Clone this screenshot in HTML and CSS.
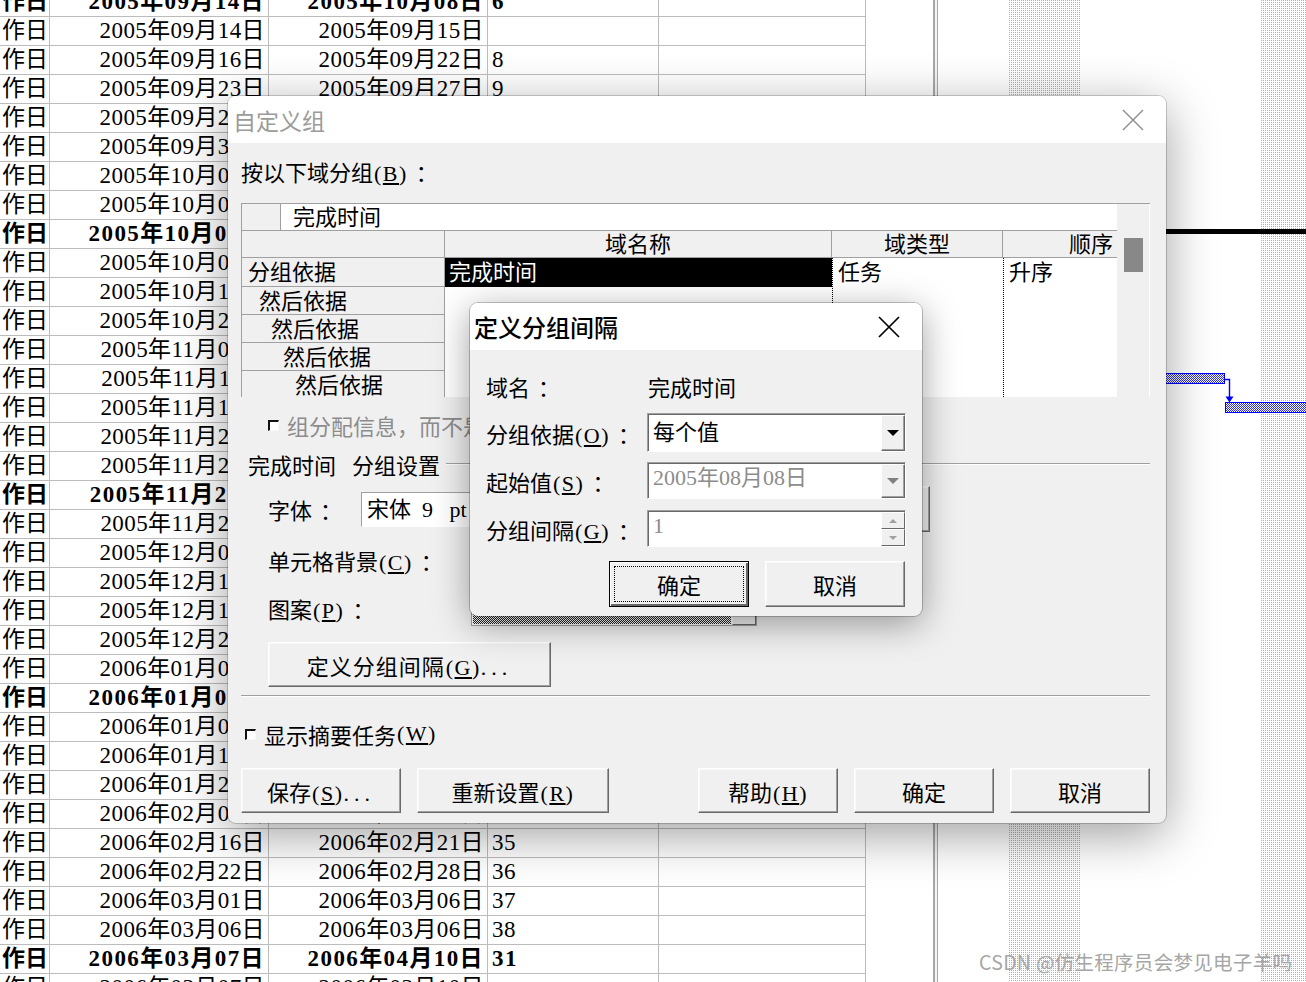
FILE: index.html
```html
<!DOCTYPE html>
<html lang="zh-CN">
<head>
  <meta charset="UTF-8">
  <title>自定义组</title>
  <link rel="stylesheet" href="styles.css">
</head>
<body>

<div class="project">
  <!-- tabla de tareas -->
  <div class="sheet">
    <div class="row summary"><span class="c1">作日</span><span class="c2">2005年09月14日</span><span class="c3">2005年10月08日</span><span class="c4">6</span><span class="c5"></span></div>
    <div class="row"><span class="c1">作日</span><span class="c2">2005年09月14日</span><span class="c3">2005年09月15日</span><span class="c4"></span><span class="c5"></span></div>
    <div class="row"><span class="c1">作日</span><span class="c2">2005年09月16日</span><span class="c3">2005年09月22日</span><span class="c4">8</span><span class="c5"></span></div>
    <div class="row"><span class="c1">作日</span><span class="c2">2005年09月23日</span><span class="c3">2005年09月27日</span><span class="c4">9</span><span class="c5"></span></div>
    <div class="row"><span class="c1">作日</span><span class="c2">2005年09月28日</span><span class="c3">2005年09月29日</span><span class="c4">10</span><span class="c5"></span></div>
    <div class="row"><span class="c1">作日</span><span class="c2">2005年09月30日</span><span class="c3">2005年10月04日</span><span class="c4">11</span><span class="c5"></span></div>
    <div class="row"><span class="c1">作日</span><span class="c2">2005年10月05日</span><span class="c3">2005年10月06日</span><span class="c4">12</span><span class="c5"></span></div>
    <div class="row"><span class="c1">作日</span><span class="c2">2005年10月07日</span><span class="c3">2005年10月08日</span><span class="c4">13</span><span class="c5"></span></div>
    <div class="row summary"><span class="c1">作日</span><span class="c2">2005年10月09日</span><span class="c3">2005年11月25日</span><span class="c4">7</span><span class="c5"></span></div>
    <div class="row"><span class="c1">作日</span><span class="c2">2005年10月09日</span><span class="c3">2005年10月12日</span><span class="c4"></span><span class="c5"></span></div>
    <div class="row"><span class="c1">作日</span><span class="c2">2005年10月13日</span><span class="c3">2005年10月20日</span><span class="c4">16</span><span class="c5"></span></div>
    <div class="row"><span class="c1">作日</span><span class="c2">2005年10月21日</span><span class="c3">2005年11月03日</span><span class="c4">17</span><span class="c5"></span></div>
    <div class="row"><span class="c1">作日</span><span class="c2">2005年11月04日</span><span class="c3">2005年11月10日</span><span class="c4">18</span><span class="c5"></span></div>
    <div class="row"><span class="c1">作日</span><span class="c2">2005年11月11日</span><span class="c3">2005年11月14日</span><span class="c4">19</span><span class="c5"></span></div>
    <div class="row"><span class="c1">作日</span><span class="c2">2005年11月15日</span><span class="c3">2005年11月21日</span><span class="c4">20</span><span class="c5"></span></div>
    <div class="row"><span class="c1">作日</span><span class="c2">2005年11月22日</span><span class="c3">2005年11月23日</span><span class="c4">21</span><span class="c5"></span></div>
    <div class="row"><span class="c1">作日</span><span class="c2">2005年11月24日</span><span class="c3">2005年11月25日</span><span class="c4">22</span><span class="c5"></span></div>
    <div class="row summary"><span class="c1">作日</span><span class="c2">2005年11月26日</span><span class="c3">2006年01月06日</span><span class="c4">15</span><span class="c5"></span></div>
    <div class="row"><span class="c1">作日</span><span class="c2">2005年11月26日</span><span class="c3">2005年12月02日</span><span class="c4"></span><span class="c5"></span></div>
    <div class="row"><span class="c1">作日</span><span class="c2">2005年12月03日</span><span class="c3">2005年12月12日</span><span class="c4">25</span><span class="c5"></span></div>
    <div class="row"><span class="c1">作日</span><span class="c2">2005年12月13日</span><span class="c3">2005年12月16日</span><span class="c4">26</span><span class="c5"></span></div>
    <div class="row"><span class="c1">作日</span><span class="c2">2005年12月17日</span><span class="c3">2005年12月23日</span><span class="c4">27</span><span class="c5"></span></div>
    <div class="row"><span class="c1">作日</span><span class="c2">2005年12月24日</span><span class="c3">2006年01月02日</span><span class="c4">28</span><span class="c5"></span></div>
    <div class="row"><span class="c1">作日</span><span class="c2">2006年01月03日</span><span class="c3">2006年01月06日</span><span class="c4">29</span><span class="c5"></span></div>
    <div class="row summary"><span class="c1">作日</span><span class="c2">2006年01月07日</span><span class="c3">2006年03月06日</span><span class="c4">24</span><span class="c5"></span></div>
    <div class="row"><span class="c1">作日</span><span class="c2">2006年01月07日</span><span class="c3">2006年01月12日</span><span class="c4"></span><span class="c5"></span></div>
    <div class="row"><span class="c1">作日</span><span class="c2">2006年01月13日</span><span class="c3">2006年01月20日</span><span class="c4">32</span><span class="c5"></span></div>
    <div class="row"><span class="c1">作日</span><span class="c2">2006年01月21日</span><span class="c3">2006年02月06日</span><span class="c4">33</span><span class="c5"></span></div>
    <div class="row"><span class="c1">作日</span><span class="c2">2006年02月07日</span><span class="c3">2006年02月15日</span><span class="c4">34</span><span class="c5"></span></div>
    <div class="row"><span class="c1">作日</span><span class="c2">2006年02月16日</span><span class="c3">2006年02月21日</span><span class="c4">35</span><span class="c5"></span></div>
    <div class="row"><span class="c1">作日</span><span class="c2">2006年02月22日</span><span class="c3">2006年02月28日</span><span class="c4">36</span><span class="c5"></span></div>
    <div class="row"><span class="c1">作日</span><span class="c2">2006年03月01日</span><span class="c3">2006年03月06日</span><span class="c4">37</span><span class="c5"></span></div>
    <div class="row"><span class="c1">作日</span><span class="c2">2006年03月06日</span><span class="c3">2006年03月06日</span><span class="c4">38</span><span class="c5"></span></div>
    <div class="row summary"><span class="c1">作日</span><span class="c2">2006年03月07日</span><span class="c3">2006年04月10日</span><span class="c4">31</span><span class="c5"></span></div>
    <div class="row"><span class="c1">作日</span><span class="c2">2006年03月07日</span><span class="c3">2006年03月10日</span><span class="c4"></span><span class="c5"></span></div>
  </div>

  <div class="gap"></div>
  <div class="divider"></div>

  <!-- diagrama -->
  <div class="gantt">
    <div class="weekend w1"></div>
    <div class="weekend w2"></div>
    <div class="summary-line"></div>
    <div class="bar bar1"></div>
    <svg class="link" width="14" height="28" viewBox="0 0 14 28">
      <path d="M0 2.5H5.5V20" fill="none" stroke="#0000ff" stroke-width="1.4"/>
      <polygon points="1.5,19.5 9.5,19.5 5.5,25.5" fill="#0000ff"/>
    </svg>
    <div class="bar bar2"></div>
  </div>
</div>

<!-- Dialogo principal -->
<div class="dialog">
  <div class="titlebar">
    <span class="title gray">自定义组</span>
    <svg width="22" height="22" viewBox="0 0 22 22"><path d="M1 1L21 21M21 1L1 21" stroke="#8c8c8c" stroke-width="1.4"/></svg>
  </div>

  <div class="dialog-body">
    <div class="group-label">按以下域分组<span class="key">(<u>B</u>)</span><span class="colon">：</span></div>

    <div class="fields">
      <div class="corner"></div>
      <div class="current">完成时间</div>
      <div class="scroll"><div class="thumb"></div></div>

      <div class="head-blank"></div>
      <div class="head h-name">域名称</div>
      <div class="head h-type">域类型</div>
      <div class="head h-order">顺序</div>

      <div class="lbl l1">分组依据</div>
      <div class="lbl l2">然后依据</div>
      <div class="lbl l3">然后依据</div>
      <div class="lbl l4">然后依据</div>
      <div class="lbl l5">然后依据</div>

      <div class="selected">完成时间</div>
      <div class="blank"></div>
      <div class="col-type">任务</div>
      <div class="col-order">升序</div>
    </div>

    <div class="check-row disabled">
      <span class="box"></span>组分配信息，而不是显示摘要任务
    </div>

    <div class="section">
      <span>完成时间</span><span class="section-name">分组设置</span>
      <div class="section-line"></div>
    </div>

    <div class="font-row">
      <span class="font-label">字体<span class="colon">：</span></span>
      <div class="font-box">宋体&nbsp;&nbsp;9&nbsp;&nbsp;&nbsp;pt</div>
      <button class="btn font-btn">字体...</button>
    </div>

    <div class="plain-row">单元格背景<span class="key">(<u>C</u>)</span><span class="colon">：</span></div>

    <div class="pattern-row">
      <span class="pattern-label">图案<span class="key">(<u>P</u>)</span><span class="colon">：</span></span>
      <div class="pattern">
        <div class="pattern-fill"></div>
        <div class="pattern-btn"></div>
      </div>
    </div>

    <button class="btn interval-btn">定义分组间隔<span class="key">(<u>G</u>)</span><span class="dots">...</span></button>

    <div class="separator"></div>

    <div class="check-row summary-check">
      <span class="box"></span>显示摘要任务<span class="key">(<u>W</u>)</span>
    </div>

    <div class="buttons">
      <button class="btn b-save">保存<span class="key">(<u>S</u>)</span><span class="dots">...</span></button>
      <button class="btn b-reset">重新设置<span class="key">(<u>R</u>)</span></button>
      <button class="btn b-std push">帮助<span class="key">(<u>H</u>)</span></button>
      <button class="btn b-std">确定</button>
      <button class="btn b-std">取消</button>
    </div>
  </div>

  <!-- Dialogo secundario -->
  <div class="subdialog">
    <div class="titlebar sub-titlebar">
      <span class="title">定义分组间隔</span>
      <svg width="22" height="22" viewBox="0 0 22 22"><path d="M1 1L21 21M21 1L1 21" stroke="#000" stroke-width="1.7"/></svg>
    </div>
    <div class="sub-body">
      <div class="sub-row r-name">
        <span class="sub-label">域名<span class="colon">：</span></span><span>完成时间</span>
      </div>
      <div class="sub-row r-by">
        <span class="sub-label">分组依据<span class="key">(<u>O</u>)</span><span class="colon">：</span></span>
        <div class="combo">
          <div class="combo-text">每个值</div>
          <div class="drop"><span class="arrow"></span></div>
        </div>
      </div>
      <div class="sub-row r-start">
        <span class="sub-label">起始值<span class="key">(<u>S</u>)</span><span class="colon">：</span></span>
        <div class="combo off">
          <div class="combo-text">2005年08月08日</div>
          <div class="drop"><span class="arrow"></span></div>
        </div>
      </div>
      <div class="sub-row r-step">
        <span class="sub-label">分组间隔<span class="key">(<u>G</u>)</span><span class="colon">：</span></span>
        <div class="combo off">
          <div class="combo-text">1</div>
          <div class="spin">
            <div class="spin-btn"><span class="arrow-up"></span></div>
            <div class="spin-btn"><span class="arrow-down"></span></div>
          </div>
        </div>
      </div>
      <div class="sub-buttons">
        <button class="btn b-std default">确定</button>
        <button class="btn b-std">取消</button>
      </div>
    </div>
  </div>
</div>

<div class="watermark">CSDN @仿生程序员会梦见电子羊吗</div>

</body>
</html>
```

FILE: styles.css
```css
* {
  box-sizing: border-box;
}

body {
  margin: 0;
  width: 1306px;
  height: 982px;
  overflow: hidden;
  position: relative;
  background: #fff;
  font-family: "Liberation Serif", "Noto Sans CJK SC", serif;
  color: #000;
  text-spacing-trim: space-all;
}

u {
  text-underline-offset: 2px;
}

.key {
  letter-spacing: 1.5px;
  margin-left: 1px;
}

.colon {
  margin-left: 8px;
}

.dots {
  letter-spacing: 5px;
}

/* ---------- fondo: tabla + gantt ---------- */

.project {
  display: flex;
  height: 982px;
}

.sheet {
  width: 866px;
}

.row {
  display: grid;
  grid-template-columns: 50px 219px 219px 171px 207px;
  height: 29px;
  border-bottom: 1px solid #bcbcbc;
  font-size: 23px;
  line-height: 28px;
  letter-spacing: 0.4px;
  white-space: nowrap;
}

.row:first-child {
  margin-top: -12px;
}

.row span {
  border-right: 1px solid #bcbcbc;
  overflow: hidden;
}

.row.summary {
  font-weight: bold;
  letter-spacing: 1.4px;
}

.c1 {
  padding-left: 2px;
  letter-spacing: 0;
}

.c2, .c3 {
  text-align: right;
  padding-right: 3px;
}

.c4 {
  padding-left: 4px;
}

.gap {
  width: 67px;
}

.divider {
  width: 5px;
  border-left: 2px solid #a8a8a8;
  border-right: 1px solid #a8a8a8;
  background: #f4f4f4;
}

.gantt {
  flex: 1;
  position: relative;
  overflow: hidden;
}

.weekend {
  position: absolute;
  top: 0;
  bottom: 0;
  width: 73px;
  background: repeating-conic-gradient(#b0b0b0 0 25%, #fff 0 100%) 0 0 / 2px 2px;
}

.w1 { left: 70px; }
.w2 { left: 322px; }

.summary-line {
  position: absolute;
  left: 0;
  right: 0;
  top: 229px;
  height: 5px;
  background: #000;
}

.bar {
  position: absolute;
  height: 11px;
  border: 1px solid #0000ff;
  background: repeating-conic-gradient(#2a2aff 0 25%, #fff 0 50%) 0 0 / 2px 2px;
}

.bar1 { left: 200px; width: 87px; top: 373px; }
.bar2 { left: 287px; width: 90px; top: 402px; }

.link {
  position: absolute;
  left: 286px;
  top: 377px;
}

/* ---------- dialogos ---------- */

.dialog {
  position: absolute;
  left: 228px;
  top: 96px;
  width: 938px;
  height: 727px;
  background: #f0f0f0;
  border-radius: 8px;
  box-shadow: 0 0 0 1px rgba(0, 0, 0, 0.18), 0 12px 50px rgba(0, 0, 0, 0.38);
  font-size: 22px;
}

.titlebar {
  height: 47px;
  background: #fff;
  border-radius: 8px 8px 0 0;
  display: flex;
  align-items: center;
  justify-content: space-between;
  padding: 0 22px 0 5px;
}

.title {
  font-family: "Noto Sans CJK SC", sans-serif;
  font-size: 23px;
}

.title.gray {
  color: #9b9b9b;
}

.dialog-body {
  padding: 17px 16px 0 13px;
}

.group-label {
  height: 28px;
  line-height: 28px;
}

.fields {
  margin-top: 15px;
  display: grid;
  grid-template-columns: 39px 164px 387px 171px 114px 33px;
  grid-template-rows: 27px 27px 29px 28px 28px 28px 26px;
  border-top: 1px solid #a0a0a0;
  border-left: 1px solid #a0a0a0;
  background: #fff;
  line-height: 27px;
  white-space: nowrap;
}

.corner {
  grid-column: 1;
  grid-row: 1;
  background: #f0f0f0;
  border-right: 1px solid #a0a0a0;
  border-bottom: 1px solid #a0a0a0;
}

.current {
  grid-column: 2 / 6;
  grid-row: 1;
  padding-left: 12px;
  border-bottom: 1px solid #a0a0a0;
}

.scroll {
  grid-column: 6;
  grid-row: 1 / 8;
  background: #f0f0f0;
  border-right: 1px solid #fff;
  position: relative;
}

.thumb {
  position: absolute;
  left: 7px;
  top: 34px;
  width: 19px;
  height: 34px;
  background: #888;
}

.head-blank {
  grid-column: 1 / 3;
  grid-row: 2;
  background: #f0f0f0;
  border-right: 1px solid #a0a0a0;
  border-bottom: 1px solid #a0a0a0;
}

.head {
  grid-row: 2;
  background: #f0f0f0;
  border-right: 1px solid #a0a0a0;
  border-bottom: 1px solid #a0a0a0;
  text-align: center;
}

.h-name { grid-column: 3; }
.h-type { grid-column: 4; }
.h-order {
  grid-column: 5;
  text-align: right;
  padding-right: 4px;
  border-right: none;
}

.lbl {
  grid-column: 1 / 3;
  background: #f0f0f0;
  border-right: 1px solid #a0a0a0;
  border-bottom: 1px solid #a0a0a0;
  line-height: 30px;
}

.l1 { grid-row: 3; padding-left: 6px; }
.l2 { grid-row: 4; padding-left: 17px; }
.l3 { grid-row: 5; padding-left: 29px; }
.l4 { grid-row: 6; padding-left: 41px; }
.l5 { grid-row: 7; padding-left: 53px; border-bottom: none; }

.selected {
  grid-column: 3;
  grid-row: 3;
  background: #000;
  color: #fff;
  padding-left: 4px;
  line-height: 29px;
}

.blank {
  grid-column: 3;
  grid-row: 4 / 8;
}

.col-type, .col-order {
  grid-row: 3 / 8;
  border-left: 1px dotted #000;
  padding-left: 5px;
  line-height: 29px;
}

.col-type { grid-column: 4; }
.col-order { grid-column: 5; }

.check-row {
  margin-top: 15px;
  height: 26px;
  display: flex;
  align-items: center;
  padding-left: 27px;
  white-space: nowrap;
}

.check-row.disabled {
  color: #8c8c8c;
}

.box {
  width: 11px;
  height: 11px;
  background: #fff;
  border-style: solid;
  border-width: 2px 1px 1px 2px;
  border-color: #111 #f8f8f8 #f8f8f8 #111;
  margin-right: 8px;
  flex-shrink: 0;
}

.section {
  margin-top: 13px;
  height: 26px;
  display: flex;
  align-items: center;
  padding-left: 7px;
}

.section-name {
  margin-left: 16px;
}

.section-line {
  flex: 1;
  margin-left: 6px;
  border-top: 1px solid #a0a0a0;
  border-bottom: 1px solid #fff;
}

.font-row {
  margin-top: 9px;
  height: 46px;
  display: flex;
  align-items: center;
  padding-left: 27px;
}

.font-label {
  width: 93px;
}

.font-box {
  width: 399px;
  height: 35px;
  background: #fff;
  border: 1px solid;
  border-color: #a0a0a0 #fff #fff #a0a0a0;
  padding-left: 5px;
  line-height: 33px;
}

.font-btn {
  margin-left: 6px;
  width: 164px;
  height: 46px;
}

.plain-row {
  margin-top: 14px;
  height: 34px;
  line-height: 34px;
  padding-left: 27px;
}

.pattern-row {
  margin-top: 10px;
  height: 36px;
  display: flex;
  align-items: center;
  padding-left: 27px;
}

.pattern-label {
  width: 203px;
}

.pattern {
  display: flex;
  width: 286px;
  height: 35px;
  border: 1px solid #a0a0a0;
  background: #fff;
}

.pattern-fill {
  flex: 1;
  margin: 1px;
  background: repeating-conic-gradient(#222 0 25%, #fff 0 50%) 0 0 / 2px 2px;
}

.pattern-btn {
  width: 24px;
  background: #f0f0f0;
  border: 1px solid;
  border-color: #fff #696969 #696969 #fff;
}

.btn {
  font: inherit;
  font-size: 22px;
  color: #000;
  padding: 0;
  background: #f0f0f0;
  border: 1px solid;
  border-color: #fff #696969 #696969 #fff;
  box-shadow: inset -1px -1px #a0a0a0, inset 1px 1px #f8f8f8;
  white-space: nowrap;
}

.interval-btn {
  display: block;
  margin: 16px 0 0 27px;
  width: 283px;
  height: 45px;
  letter-spacing: 1px;
}

.separator {
  margin-top: 8px;
  border-top: 1px solid #a0a0a0;
  border-bottom: 1px solid #fff;
}

.summary-check {
  margin-top: 24px;
  padding-left: 4px;
}

.buttons {
  margin-top: 21px;
  display: flex;
  gap: 16px;
  height: 45px;
}

.b-save { width: 160px; }
.b-reset { width: 192px; }
.b-std { width: 140px; }

.push {
  margin-left: auto;
}

/* ---------- definir intervalo ---------- */

.subdialog {
  position: absolute;
  left: 242px;
  top: 207px;
  width: 452px;
  height: 313px;
  background: #f0f0f0;
  border-radius: 8px;
  box-shadow: 0 0 0 1px rgba(0, 0, 0, 0.22), 0 8px 36px rgba(0, 0, 0, 0.38);
}

.sub-titlebar {
  padding-left: 4px;
}

.sub-titlebar .title {
  font-size: 24px;
  font-weight: 500;
}

.sub-body {
  padding: 22px 16px 0;
}

.sub-row {
  display: flex;
  align-items: center;
  white-space: nowrap;
}

.sub-label {
  width: 161px;
}

.r-name { height: 28px; }
.r-name .sub-label { width: 162px; }
.r-by { margin-top: 13px; height: 39px; }
.r-start { margin-top: 10px; height: 37px; }
.r-step { margin-top: 11px; height: 37px; }

.combo {
  width: 259px;
  height: 100%;
  display: flex;
  background: #fff;
  border: 1px solid;
  border-color: #a0a0a0 #fff #fff #a0a0a0;
  box-shadow: inset 1px 1px #696969;
}

.combo-text {
  flex: 1;
  padding-left: 5px;
  line-height: 37px;
}

.combo.off .combo-text {
  color: #8c8c8c;
  line-height: 30px;
}

.drop {
  width: 24px;
  margin: 1px 0 0 0;
  background: #f0f0f0;
  border: 1px solid;
  border-color: #fff #696969 #696969 #fff;
  box-shadow: inset -1px -1px #a0a0a0;
  display: flex;
  align-items: center;
  justify-content: center;
}

.arrow {
  border-left: 6px solid transparent;
  border-right: 6px solid transparent;
  border-top: 6px solid #000;
}

.combo.off .arrow {
  border-top-color: #808080;
}

.spin {
  width: 24px;
  display: flex;
  flex-direction: column;
  margin-top: 1px;
}

.spin-btn {
  flex: 1;
  background: #f0f0f0;
  border: 1px solid;
  border-color: #fff #696969 #696969 #fff;
  display: flex;
  align-items: center;
  justify-content: center;
}

.arrow-up {
  border-left: 4px solid transparent;
  border-right: 4px solid transparent;
  border-bottom: 4px solid #a0a0a0;
}

.arrow-down {
  border-left: 4px solid transparent;
  border-right: 4px solid transparent;
  border-top: 4px solid #a0a0a0;
}

.sub-buttons {
  margin-top: 14px;
  height: 46px;
  display: flex;
  justify-content: flex-end;
  gap: 16px;
  padding-right: 1px;
}

.btn.default {
  border: 1px solid #000;
  box-shadow: inset 1px 1px #fff, inset -2px -2px #696969;
  outline: 1px dotted #000;
  outline-offset: -6px;
}

.watermark {
  position: absolute;
  left: 979px;
  top: 947px;
  font-family: "Noto Sans CJK SC", sans-serif;
  font-size: 19.5px;
  letter-spacing: 0.3px;
  color: #a6a6a6;
  white-space: nowrap;
}
```
